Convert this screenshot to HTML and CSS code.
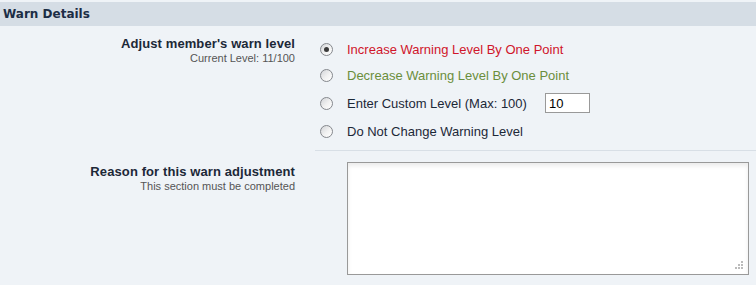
FILE: index.html
```html
<!DOCTYPE html>
<html>
<head>
<meta charset="utf-8">
<title>Warn Details</title>
<link rel="stylesheet" href="styles.css">
</head>
<body>

<div class="block">
	<h3 class="maintitle">Warn Details</h3>
	<ul class="form">
		<li class="field">
			<div class="label">
				<strong>Adjust member's warn level</strong>
				<span class="desc">Current Level: 11/100</span>
			</div>
			<div class="control">
				<ul class="options">
					<li><input type="radio" name="level" checked> <span class="up">Increase Warning Level By One Point</span></li>
					<li><input type="radio" name="level"> <span class="down">Decrease Warning Level By One Point</span></li>
					<li class="custom"><input type="radio" name="level"> <span>Enter Custom Level (Max: 100)</span> <input type="text" class="level" value="10"></li>
					<li><input type="radio" name="level"> <span>Do Not Change Warning Level</span></li>
				</ul>
			</div>
		</li>
		<li class="field">
			<div class="label">
				<strong>Reason for this warn adjustment</strong>
				<span class="desc">This section must be completed</span>
			</div>
			<div class="control reason">
				<div class="textwrap">
					<textarea></textarea>
					<!-- resize grip -->
					<svg class="grip" width="10" height="10" viewBox="0 0 10 10">
						<rect x="7" y="1" width="2" height="2"/>
						<rect x="4" y="4" width="2" height="2"/>
						<rect x="7" y="4" width="2" height="2"/>
						<rect x="1" y="7" width="2" height="2"/>
						<rect x="4" y="7" width="2" height="2"/>
						<rect x="7" y="7" width="2" height="2"/>
					</svg>
				</div>
			</div>
		</li>
	</ul>
</div>

</body>
</html>
```

FILE: styles.css
```css
* {
	box-sizing: border-box;
}

body, ul, li, h3 {
	padding: 0;
	margin: 0;
	border: 0;
}

body {
	background: #eff3f7;
	font-size: 13px;
	font-family: "Liberation Sans", Arial, sans-serif;
	color: #1c2837;
}

.maintitle {
	margin-top: 2px;
	height: 24px;
	line-height: 24px;
	padding-left: 3px;
	background: #d5dde5;
	font-family: "DejaVu Sans", Verdana, sans-serif;
	font-size: 12px;
	font-weight: bold;
	color: #1c2d45;
}

.form {
	list-style: none;
}

.field {
	display: flex;
}

.label {
	width: 315px;
	flex-shrink: 0;
	padding: 10px 20px 0 0;
	text-align: right;
}

.label strong {
	display: block;
	line-height: 16px;
	font-size: 13px;
	letter-spacing: 0.1px;
	color: #1c2837;
}

.label .desc {
	display: block;
	line-height: 13px;
	font-size: 11px;
	color: #555;
}

.field + .field .label {
	padding-top: 13px;
}

.control {
	flex: 1;
	padding: 10px 0 6px 5px;
	border-bottom: 1px solid #d8dfe6;
}

.options {
	list-style: none;
}

.options li {
	display: flex;
	align-items: center;
	height: 26px;
}

.options li.custom {
	height: 30px;
}

.options input[type=radio] {
	-webkit-appearance: none;
	appearance: none;
	width: 13px;
	height: 13px;
	margin: 0 14px 0 0;
	border: 1px solid #85888d;
	border-radius: 50%;
	background: linear-gradient(135deg, #d2d4d8 0%, #f2f2f2 55%, #ffffff 100%);
	position: relative;
}

.options input[type=radio]:checked::after {
	content: "";
	position: absolute;
	left: 3px;
	top: 3px;
	width: 5px;
	height: 5px;
	border-radius: 50%;
	background: #3a3a3a;
}

.up {
	color: #d0152b;
}

.down {
	color: #6b8e3c;
}

.level {
	margin-left: 18px;
	width: 45px;
	height: 20px;
	padding: 0 3px;
	border: 1px solid #999;
	background: #fff;
	font-family: "Liberation Sans", Arial, sans-serif;
	font-size: 13px;
	color: #000;
}

.reason {
	padding: 11px 8px 10px 32px;
	border-bottom: 0;
}

.textwrap {
	position: relative;
	width: 402px;
}

.textwrap textarea {
	display: block;
	width: 402px;
	height: 113px;
	border: 1px solid #999;
	background: #fff;
	box-shadow: inset 0 3px 4px rgba(0, 0, 0, 0.08);
	resize: none;
}

.grip {
	position: absolute;
	right: 5px;
	bottom: 5px;
	fill: #bbb;
}
```
